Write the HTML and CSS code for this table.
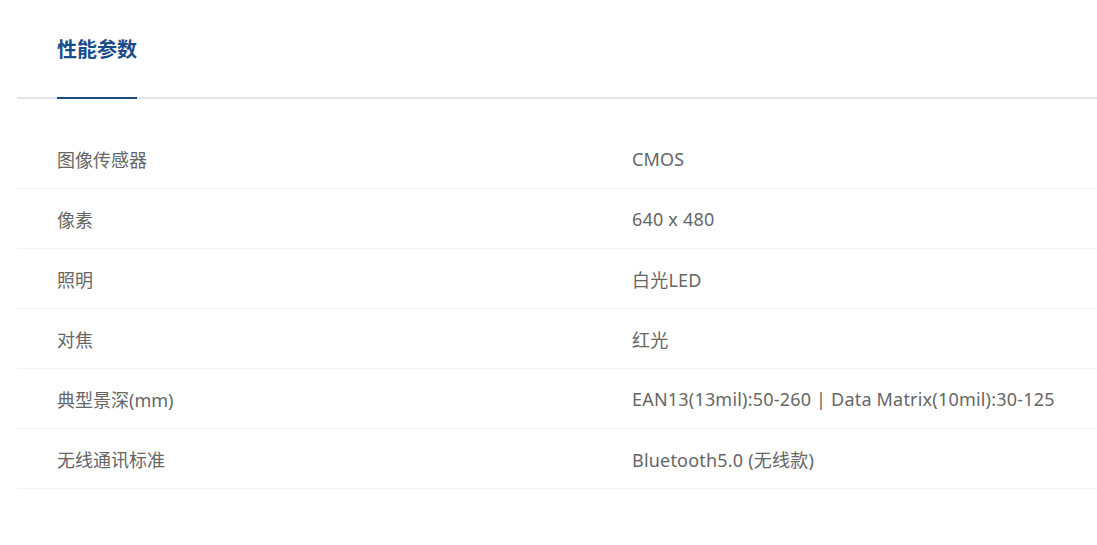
FILE: index.html
```html
<!DOCTYPE html>
<html lang="zh">
<head>
<meta charset="utf-8">
<link rel="stylesheet" href="styles.css">
</head>
<body>
<div class="page">
  <div class="tabs">
    <div class="tab">性能参数</div>
  </div>
  <div class="table">
    <div class="row"><div class="key">图像传感器</div><div class="val">CMOS</div></div>
    <div class="row"><div class="key">像素</div><div class="val">640 x 480</div></div>
    <div class="row"><div class="key">照明</div><div class="val">白光LED</div></div>
    <div class="row"><div class="key">对焦</div><div class="val">红光</div></div>
    <div class="row"><div class="key">典型景深(mm)</div><div class="val">EAN13(13mil):50-260 | Data Matrix(10mil):30-125</div></div>
    <div class="row"><div class="key">无线通讯标准</div><div class="val">Bluetooth5.0 (无线款)</div></div>
  </div>
</div>
</body>
</html>
```
FILE: styles.css
```css
html, body {
  margin: 0;
  padding: 0;
  background: #fff;
}
body {
  font-family: "Noto Sans", "Noto Sans CJK SC", sans-serif;
}
.page {
  padding-left: 17px;
}
.tabs {
  display: flex;
  border-bottom: 2px solid #e4e4e4;
}
.tab {
  margin-left: 40px;
  padding: 39px 0 38px;
  line-height: 20px;
  font-size: 20px;
  font-weight: bold;
  color: #1b4c8a;
  border-bottom: 2px solid #1b4c8a;
  margin-bottom: -2px;
  font-family: "Noto Sans CJK SC", sans-serif;
}
.table {
  margin-top: 30px;
}
.row {
  display: grid;
  grid-template-columns: 575px 1fr;
  height: 59px;
  align-items: center;
  border-bottom: 1px solid #f2f2f2;
  padding-left: 40px;
  font-size: 18px;
  color: #666;
}
.val {
  letter-spacing: 0.2px;
}
```
